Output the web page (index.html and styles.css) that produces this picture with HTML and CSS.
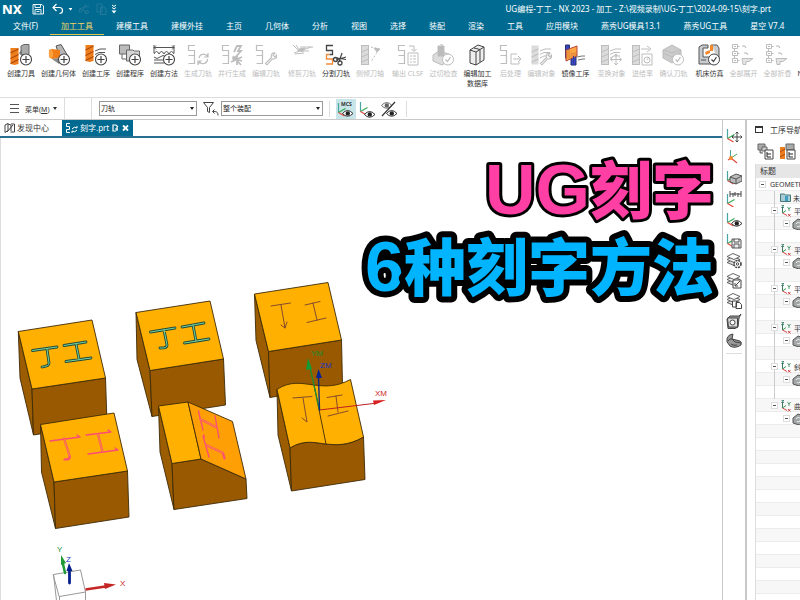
FILE: index.html
```html
<!DOCTYPE html>
<html lang="zh-CN">
<head>
<meta charset="utf-8">
<title>NX 2023 - 加工</title>
<link rel="stylesheet" href="styles.css">
</head>
<body>
<svg class="sprite" aria-hidden="true">
  <defs>
    <g id="plus"><circle cx="16" cy="15.500" r="5.500" fill="#fff" stroke="#444" stroke-width="1.100"/><path d="M12.500 15.500h7M16 12v7" stroke="#444" stroke-width="1.200"/></g>
    <g id="check"><circle cx="16" cy="15.500" r="5.500" fill="#fff" stroke="currentColor"/><path d="M13.500 15.500l2 2 3-4.500" fill="none" stroke="currentColor" stroke-width="1.200"/></g>
    <g id="path"><path d="M8 1.500h-6.500v5h6v5h-6M1.500 11.500h6v8h-6" fill="none" stroke="currentColor" stroke-width="1.200"/></g>
    <g id="endmill"><rect x="1.500" y="1.500" width="7" height="19" fill="currentColor" fill-opacity=".55"/><path d="M1.500 8l7-3M1.500 13l7-3M1.500 18l7-3" stroke="currentColor"/></g>
    <g id="drill"><path d="M.500 4h8v16l-4 1-4-1z" fill="#ef7d1c"/><path d="M.500 9l8-4M.500 14.500l8-4M.500 19.500l8-4" stroke="#a94c0c" stroke-width="1.100"/></g>
    <g id="wrench"><path d="M10.500 19.500l6-6c-1-3 1-5 3.500-4.500l-2 2.500 2 1.500 1.500-2c1 3-2 4.500-4 3.800l-5.500 6z" fill="#fff" stroke="currentColor" stroke-width="1.100"/></g>
    <g id="passes"><path d="M10 7l5-2h6M10 10.500l4-2h6M10 14l4-2h6" fill="none" stroke="currentColor"/></g>
    <g id="eye"><path d="M5.500 11.500q5-6 10.500 0-5.500 5.500-10.500 0z" fill="#fff" stroke="#333"/><circle cx="10.800" cy="11.400" r="2.200" fill="#222"/></g>
    <g id="axes" fill="none" stroke-width="1.200"><path d="M1.500 1v9.500" stroke="#49a5a0"/><path d="M1.500 10.500l7-4" stroke="#39ad56"/><path d="M1.500 10.500l6 3.500" stroke="#e34a3e"/></g>
    <g id="layers" stroke="#555" stroke-width=".900"><path d="M1 9.500l6-3 7 3-6 3z" fill="#ddd"/><path d="M1 6.500l6-3 7 3-6 3z" fill="#eee"/><path d="M1 3.500l6-3 7 3-6 3z" fill="#fff"/></g>
    <g id="csys" fill="none"><path d="M2.500 2v6" stroke="#3a7a62"/><path d="M2.500 8l3.500-2.500" stroke="#3aa05a"/><path d="M2.500 8l4.500 2.500" stroke="#d64545"/><path d="M1.500.500h2.500l-2.500 2h2.500" stroke="#376" stroke-width=".800"/><path d="M7.500 2l1.500 2 1.500-2M9 4v2" stroke="#3c8d5b" stroke-width=".900"/><path d="M8 9l2.500 2.500M10.500 9l-2.500 2.500" stroke="#c33" stroke-width=".900"/></g>
    <g id="cavity"><path d="M1 5l5-4 6 2v6l-5 3-6-2z" fill="#a3a6a6" stroke="#555"/><path d="M4 6c2-3 6-1 4 2-1 1-3 1-3 0" fill="none" stroke="#eee"/></g>
    <g id="tree"><path d="M2.500 1v17M2.500 2.500h5M2.500 9.500h5M2.500 16.500h5" stroke="currentColor" fill="none"/><path d="M.500.500h5v4h-5zM.500 7.500h5v4h-5zM.500 14.500h5v4h-5z" fill="#fff" stroke="currentColor"/><path d="M2 2.500h2M2 9.500h2M2 16.500h2M10 2h3l1 2M12 9h3l1 2M10 14.500h11l-4 3h-3v3h-3z" stroke="currentColor" fill="currentColor" fill-opacity=".4"/></g>
  </defs>
</svg>

<div class="app">
  <header class="head">
    <div class="titlebar">
      <strong class="brand">NX</strong>
      <div class="quick">
        <button aria-label="保存"><svg width="12" height="12" viewBox="0 0 12 12" fill="none" stroke="#e5f1f5"><path d="M1 1.500h9l1.500 1.500v8h-10.500zM3 1.500v3h5.500v-3M3 11v-4.500h6v4.500M4.500 8.500h3"/></svg></button>
        <button aria-label="撤消"><svg width="20" height="12" viewBox="0 0 20 12" fill="none" stroke="#fff"><path d="M4.500 1l-3.500 3.500 3.500 3.500M1 4.500h6.500c4 0 4 6 0 6" stroke-width="1.200"/><path d="M16.500 5h4l-2 2.500z" fill="#fff" stroke="none"/></svg></button>
        <button aria-label="剪切"><svg width="12" height="12" viewBox="0 0 12 12" fill="none" stroke="#24799c"><path d="M1 6l10-3M5 6l3 5M8 1l-3 5"/><circle cx="2.500" cy="8" r="1.500"/><circle cx="9" cy="9" r="1.500"/></svg></button>
        <button aria-label="复制"><svg width="11" height="12" viewBox="0 0 11 12" fill="none" stroke="#24799c"><path d="M1 1h5v8h-5zM4.500 4h3.500l2 2v5.500h-5.500z"/></svg></button>
        <button aria-label="更多"><svg width="6" height="12" viewBox="0 0 6 12" fill="none" stroke="#fff"><path d="M1 2l2 1.500 2-1.500M1 4.500l2 1.500 2-1.500"/><path d="M.500 7.500h5l-2.500 3z" fill="#fff" stroke="none"/></svg></button>
      </div>
      <h1 class="doc-title">UG编程-丁工 - NX 2023 - 加工 - Z:\视频录制\UG-丁工\2024-09-15\刻字.prt</h1>
    </div>
    <nav class="menu">
      <a href="#">文件(F)</a><a href="#" class="on">加工工具</a><a href="#">建模工具</a><a href="#">建模外挂</a><a href="#">主页</a><a href="#">几何体</a><a href="#">分析</a><a href="#">视图</a><a href="#">选择</a><a href="#">装配</a><a href="#">渲染</a><a href="#">工具</a><a href="#">应用模块</a><a href="#">燕秀UG模具13.1</a><a href="#">燕秀UG工具</a><a href="#">星空 V7.4</a>
    </nav>
  </header>

  <div class="ribbon">
    <button><svg viewBox="0 0 22 22"><path d="M11 2l3-1.500h5v10h-8z" fill="#aaa" stroke="#666"/><path d="M9 9l3-4v7z" fill="#777"/><use href="#drill"/><use href="#plus"/></svg><span>创建刀具</span></button>
    <button><svg viewBox="0 0 22 22"><path d="M8 2l5-1.500 6 10-6 6z" fill="#b5b5b5" stroke="#555"/><path d="M1 6l3-1 8 1v8l-8 1-3-2z" fill="#f07d16"/><ellipse cx="3" cy="10" rx="2.200" ry="4" fill="#ffa03f"/><path d="M4 15l7 5v-6z" fill="#888"/><use href="#plus"/></svg><span>创建几何体</span></button>
    <button><svg viewBox="0 0 22 22"><use href="#drill" y="-3"/><g color="#555"><use href="#passes"/></g><use href="#plus"/></svg><span>创建工序</span></button>
    <button><svg viewBox="0 0 22 22"><path d="M.500 1h10v9h-10z" fill="#bbb" stroke="#666"/><path d="M3 10v5h4" fill="none" stroke="#666"/><path d="M7.500 6h6l2 1h5v10h-13z" fill="#d5d5d5" stroke="#666"/><use href="#plus"/></svg><span>创建程序</span></button>
    <button><svg viewBox="0 0 22 22" fill="none" stroke="#555"><path d="M1 1v8M21 1v8M1 3.500h20M3 1.500l-2 2 2 2M19 1.500l2 2-2 2M1 10q2.500-5 5 0 2.500-5 5 0 2.500-5 5 0 2.500-5 5 0M1 13q3 3 6 0t6 0M1 16h9M1 19h10"/><use href="#plus"/></svg><span>创建方法</span></button>
    <button disabled><svg viewBox="0 0 22 22" fill="none" stroke="currentColor"><use href="#path"/><path d="M12 14a4.500 4.500 0 0 1 8-2l1-2M20.500 15a4.500 4.500 0 0 1-8 3l-1 2M21 9v4h-4M11 21v-4h4" stroke-width="1.200"/></svg><span>生成刀轨</span></button>
    <button disabled><svg viewBox="0 0 22 22" fill="none" stroke="currentColor"><use href="#path"/><path d="M13 8l3-6h4l-3 5h3l-8 9M10 18l11-5M12 12l8 9M16 11v10M11 14l10 3" stroke-width="1.800"/></svg><span>并行生成</span></button>
    <button disabled><svg viewBox="0 0 22 22"><use href="#path"/><use href="#wrench"/></svg><span>编辑刀轨</span></button>
    <button disabled class="far"><svg viewBox="0 0 22 22" fill="none" stroke="currentColor"><path d="M2 1l6 6M5 1l4 6M3 9l9-3 8-3M9 3h13M6 7h12M4 10l9-1"/><path d="M8 5l6-1-3 4z" fill="currentColor"/></svg><span>修剪刀轨</span></button>
    <button><svg viewBox="0 0 22 22" fill="none" stroke-width="1.300"><path d="M8 1.500h-6.500v5h6v4h-3" stroke="#444"/><path d="M4.500 10.500h-3v4.500h6v5h-6.500" stroke="#f28c38"/><g stroke="#444"><path d="M9 13.500l12 2M14 18l3-9M11 16l10-3" stroke-width="1.200"/><circle cx="10.500" cy="15.500" r="2"/><circle cx="15" cy="19" r="2"/></g></svg><span>分割刀轨</span></button>
    <button disabled><svg viewBox="0 0 22 22" fill="none" stroke="currentColor"><use href="#endmill" x="1"/><path d="M12 3l8 2-8 13" stroke-dasharray="2 2"/><path d="M15 4l6 1-3 3z" fill="currentColor"/></svg><span>侧倾刀轴</span></button>
    <button disabled class="far"><svg viewBox="0 0 22 22" fill="none" stroke="currentColor"><use href="#path"/><path d="M12 2h5v5M14.500 5l2.500 2.500 2.500-2.500M11 9h10v12h-10zM13 12h2M16 12h3M13 15h2M16 15h3M13 18h2M16 18h3"/></svg><span>输出 CLSF</span></button>
    <button disabled><svg viewBox="0 0 22 22" stroke="currentColor"><path d="M1 11l6-4 10 3v7l-7 4-9-4z" fill="#ddd"/><path d="M6 2h6v10h-6z" fill="#bbb"/><path d="M8 0h2v3" fill="none"/><use href="#check"/></svg><span>过切检查</span></button>
    <button><svg viewBox="0 0 22 22" fill="#eee" stroke="#444"><path d="M4 6l8-5 6 2v13l-8 5-6-2z"/><path d="M4 6l6 2 8-5M10 8v13M8 4l6 1.500M14 5.500v12.500" fill="none"/></svg><span>编辑加工<br>数据库</span></button>
    <button disabled class="far"><svg viewBox="0 0 22 22" fill="none" stroke="currentColor"><use href="#path"/><path d="M18 10h-6v10h8v-2M14 15h8M19 12l3 3-3 3"/></svg><span>后处理</span></button>
    <button disabled><svg viewBox="0 0 22 22"><use href="#endmill"/><use href="#passes"/><use href="#wrench"/></svg><span>编辑对象</span></button>
    <button><svg viewBox="0 0 22 22"><path d="M1.500 1h4v13h-4zM7 9h5v12h-5z" fill="#3949c8" stroke="#252d70"/><path d="M2 6l11-4v10l-11 5z" fill="#ff9c31" fill-opacity=".9" stroke="#b4473c"/><path d="M4 1v5M9.500 12v9" stroke="#2f3f9e"/><path d="M13 13l5-1h3M14 16l5-1h2" fill="none" stroke="#777"/></svg><span>镜像工序</span></button>
    <button disabled class="far"><svg viewBox="0 0 22 22" fill="none" stroke="currentColor"><use href="#endmill"/><use href="#passes"/><path d="M16 10v11M10.500 15.500h11M14 12l2-2 2 2M14 19l2 2 2-2M12.500 13.500l-2 2 2 2M19.500 13.500l2 2-2 2"/></svg><span>变换对象</span></button>
    <button disabled><svg viewBox="0 0 22 22" fill="none" stroke="currentColor"><use href="#endmill"/><path d="M10 5h8M16 2l4 3-4 3M11 10h10v11h-10z"/><circle cx="16" cy="16" r="3"/><path d="M16 16l2-3"/></svg><span>进给率</span></button>
    <button disabled><svg viewBox="0 0 22 22" stroke="currentColor"><path d="M1 6l9-5 9 5v8l-9 5-9-5z" fill="#ccc"/><path d="M1 9l9 4 9-5M1 6l9 3 9-3" fill="none"/><use href="#check"/></svg><span>确认刀轨</span></button>
    <button class="far"><svg viewBox="0 0 22 22" color="#444"><path d="M1 20v-17l3-2h6v3h-5v9h8v7zM13 1h6l2 3v12" fill="#c9cccf" stroke="#555"/><path d="M7 8l5-2v3l-4 2zM12 1h3v6h-3z" fill="#f28a2d"/><path d="M3 16h5" stroke="#555"/><use href="#check"/></svg><span>机床仿真</span></button>
    <button disabled><svg viewBox="0 0 22 22"><use href="#tree"/></svg><span>全部展开</span></button>
    <button disabled><svg viewBox="0 0 22 22"><use href="#tree"/></svg><span>全部折叠</span></button>
    <button><svg viewBox="0 0 22 22"><path d="M0 5h21v11h-21z" fill="#999" stroke="#555"/></svg><span>NX 后处理</span></button>
  </div>

  <div class="selbar">
    <button class="menu-btn"><svg width="9" height="9" viewBox="0 0 9 9"><path d="M0 .500h9M0 4.500h9M0 8.500h9" stroke="#555"/></svg><span>菜单(<u>M</u>)</span><i class="caret"></i></button>
    <span class="blank"></span>
    <label class="combo"><select aria-label="类型过滤器"><option>刀轨</option></select></label>
    <button class="tool" aria-label="过滤器"><svg width="16" height="16" viewBox="0 0 16 16" fill="#fff" stroke="#444"><path d="M.500 1.500h10l-4 5v5l-2-1v-4z"/><path d="M15 14.500c0-4-2-4-5-4M11.500 8.500l-2 2 2 2" fill="none"/></svg></button>
    <label class="combo"><select aria-label="选择范围"><option>整个装配</option></select></label>
    <span class="rule"></span>
    <div class="views">
      <button class="on" aria-label="显示 MCS"><svg width="18" height="18" viewBox="0 0 18 18"><use href="#axes" y="2"/><use href="#eye" y="2"/><text x="4" y="6" class="mcs">MCS</text></svg></button>
      <button aria-label="显示坐标系"><svg width="18" height="18" viewBox="0 0 18 18"><use href="#axes" y="1"/><use href="#eye" y="3"/></svg></button>
      <button aria-label="显示和隐藏"><svg width="18" height="18" viewBox="0 0 18 18"><g opacity=".7"><use href="#eye" x="-5" y="-6"/></g><use href="#eye" y="2"/><path d="M1 16l13-14" stroke="#333" stroke-width="1.200"/></svg></button>
    </div>
    <span class="rule"></span>
  </div>

  <main class="work">
    <section class="canvas">
      <div class="tabs">
        <a href="#"><svg width="11" height="10" viewBox="0 0 11 10" fill="none" stroke="#444"><path d="M1 2l3-1.500v7l-3 2zM4 1l3 1v6M7 1h3.500v8h-4M3 9l6-7"/></svg>发现中心</a>
        <a href="#" class="on"><svg width="12" height="10" viewBox="0 0 12 10" fill="none" stroke="#fff"><path d="M4 .500h-3.500v3h3v3h-3v3h3.500M6 6q2-3 5-1v-2M11 7q-2 3-5 1v2"/></svg>刻字.prt<svg class="end" width="17" height="8" viewBox="0 0 17 8" fill="none" stroke="#fff"><path d="M4 7h-3v-6h3l2 2M3 5h3M5 3v4" stroke-width="1.200"/><path d="M11 1.500l5 5M16 1.500l-5 5" stroke-width="1.800"/></svg></a>
      </div>
      <div class="scene">
        <svg class="model" role="img" aria-label="六个刻字方块">
          <g transform="translate(-1 -138)" stroke="#3d2a08" stroke-width=".900" stroke-linejoin="round">
            <g><path fill="#9c5d00" d="M18.300 331.500L32 389l1.500 46L20 378z"/><path fill="#995900" d="M32 389l73.500-11 1.500 45-73.500 12z"/><path fill="#ffb000" d="M18.300 331.500L92 320l13.500 58L32 389z"/></g>
            <g><path fill="#9c5d00" d="M136 312.500l14 58 2 46-15-57z"/><path fill="#995900" d="M150 370.500l73.500-11.500 2 46-73.500 11.500z"/><path fill="#ffb000" d="M136 312.500L210 301l13.500 58-73.500 11.500z"/></g>
            <g><path fill="#9c5d00" d="M254.500 294l14 57.500 1.500 46-14-57z"/><path fill="#995900" d="M268.500 351.500l73-11.500 1 45-72.500 12.500z"/><path fill="#ffb000" d="M254.500 294l73.500-11.500 13.500 57.500-73 11.500z"/></g>
            <g><path fill="#9c5d00" d="M40.500 424.500L54 482l1.500 46.500L41.500 472z"/><path fill="#995900" d="M54 482l73.500-11 1.500 46-73.500 11.500z"/><path fill="#ffb000" d="M40.500 424.500L114 413l13.500 58L54 482z"/></g>
            <g><path fill="#9c5d00" d="M158.500 406l13.500 57.500 2 46L160 452z"/><path fill="#995900" d="M172 463.500l29-4.500 45 20 1 19.500-73 11z"/><path fill="#ffb000" d="M158.500 406l29.500-4 13 57-29 4.500z"/><path fill="#ff9f06" d="M188 402l44.500 19.500L246 479l-45-20z"/></g>
            <g><path fill="#9c5d00" d="M277 389.500L290 448l1.500 43L278 435z"/><path fill="#995900" d="M290 448c14-9 26-5 36-4s22 2 37.500-7l1.500 42.500-73.500 11.500z"/><path fill="#ffb000" d="M277 389.500c13-9 25-6 37-4.500 12 1.500 22 2 36.500-5.500L363.500 437c-15.500 9-27.500 8-37.500 7s-22-5-36 4z"/><path d="M314 385l12 59" fill="none"/></g>
          </g>
          <g transform="translate(-1 -138)" fill="none" stroke-linecap="round" stroke-linejoin="round">
            <g stroke="#234b3a" stroke-width="2.800"><path id="e1" d="M32.500 350.500L57 347M47 349l2 14c0 3-3 3-7 4M64 345.500l22-3.500M76 344l3 15M66 361.500l25-3.500"/><path id="e2" d="M150.500 332l24.500-4M164 330l3 15c0 3-3 3-7 3M182 327l22-4M193 325l3 16M184.500 343l24.500-4"/></g>
            <g stroke="#74d3a0" stroke-width="1"><path d="M32.500 350.500L57 347M47 349l2 14c0 3-3 3-7 4M64 345.500l22-3.500M76 344l3 15M66 361.500l25-3.500"/><path d="M150.500 332l24.500-4M164 330l3 15c0 3-3 3-7 3M182 327l22-4M193 325l3 16M184.500 343l24.500-4"/></g>
            <g stroke="#763f32" stroke-width=".900"><path d="M271 306l19.500-3M281 305l4 23M281 325l4 3 2-6M305 305l15-3.500M313 303l4 17M307 322.500l19-4.500"/><path d="M293 398l19-1.500M303 398l4 24-5-4M327 397.500l15-2.500M336 396l2 16M328 416l20-5"/></g>
            <g stroke="#fb4b77"><path stroke-width="2.200" d="M64 438.500l5.500 17c1 4-2 4-5 4M98 434l4.500 18M200 419l16 8M206 445l17 8 1.500 5.500"/><path stroke-width="1.300" d="M50 441l30-4-3-2M86 435l25-3-3-2M88 454l30-4-3-2M198.500 411l4.500 19M215 416l4 22M203 436l6 21M204 435v5"/></g>
            <path stroke="#ff9e1f" stroke-width=".800" d="M64 438.500l5.500 17M98 434l4.500 18M200 419l16 8M206 445l17 8"/>
            <path stroke="#bd2020" d="M319.500 410l54-6.500"/><path fill="#d92020" d="M373 400.500l13-.500-12 5z"/>
            <path stroke="#169033" stroke-width="1.200" d="M319.500 410l-10-45"/><path fill="#159a35" d="M308 358l4 11-6 1z"/>
            <path stroke="#0b2b82" stroke-width="1.400" d="M319.500 410l-1-34"/><path fill="#08268f" d="M318.500 369l3.500 9h-6z"/>
            <g stroke="#999"><path fill="#fff" d="M53.500 574.500l27-4.500 5 22-26 4.500z"/><path d="M53.500 574.500l3 26M59.500 596.500v6M85.500 592v10"/></g>
            <path stroke="#1f9a36" stroke-width="2.500" d="M65 573l-2-9"/><path fill="#1f9a36" d="M61 555l5 8-5 2z"/>
            <path stroke="#05208c" stroke-width="2.800" d="M69.500 583v-12"/><path fill="#05208c" d="M69 563l3.500 8h-6z"/>
            <path stroke="#c42525" stroke-width="2.600" stroke-linecap="butt" d="M85.500 589.500l20-3"/><path fill="#c42525" d="M104 583l12 1.500-11 4.500z"/>
          </g>
          <g transform="translate(-1 -138)" class="axis">
            <text x="375" y="396" fill="#d02626">XM</text><text x="320" y="368" fill="#2036c4">ZM</text><text x="311" y="356" fill="#178f35">YM</text>
            <text x="57" y="552" fill="#178f35">Y</text><text x="66" y="562" fill="#2036c4">Z</text><text x="120" y="586" fill="#d02626">X</text>
          </g>
        </svg>
        <svg class="caption" width="380" height="170">
          <text x="372" y="76" text-anchor="end" class="pink"><tspan class="latin">UG</tspan>刻字</text>
          <text x="372" y="153" text-anchor="end" class="blue"><tspan class="latin">6</tspan>种刻字方法</text>
        </svg>
      </div>
    </section>

    <aside class="side">
      <div>
        <button aria-label="移动"><svg viewBox="0 0 16 16"><use href="#axes"/><path d="M11 4v10M6 9h10M9.500 5.500l1.500-1.500 1.500 1.500M9.500 12.500l1.500 1.500 1.500-1.500M7.500 7.500l-1.500 1.500 1.500 1.500M14.500 7.500l1.500 1.500-1.500 1.500" fill="none" stroke="#444"/></svg></button>
        <button aria-label="坐标系"><svg viewBox="0 0 16 16" fill="none"><path d="M4.500 1v8" stroke="#49a5a0"/><path d="M5 9l6-4" stroke="#39ad56"/><path d="M5 9l6 5M2 11l3-2" stroke="#e34a3e" stroke-width="1.200"/><circle cx="5" cy="9" r="2" fill="#f38b31"/></svg></button>
        <button aria-label="工件"><svg viewBox="0 0 16 16"><use href="#axes"/><path d="M4 7l6-3 6 2v5l-6 3-6-2z" fill="#bbb" stroke="#555"/><path d="M4 7l6 2 6-3M10 9v5" fill="none" stroke="#555"/></svg></button>
        <button aria-label="测量"><svg viewBox="0 0 16 16" fill="none"><use href="#axes" y="2"/><path d="M4 0v6M15 0v6M4 3h11M7 2v4M9 1v4M12 2v4" stroke="#444"/></svg></button>
        <button aria-label="显示"><svg viewBox="0 0 16 16"><use href="#axes"/><use href="#eye"/></svg></button>
        <button aria-label="保存坐标系"><svg viewBox="0 0 16 16"><use href="#axes"/><path d="M6 6h8l1 1v8h-9zM8 6v3h5v-3M8 15v-4h5v4" fill="#eee" stroke="#555"/></svg></button>
      </div>
      <div class="tight">
        <button aria-label="图层设置"><svg viewBox="0 0 16 16"><use href="#layers"/><circle cx="11.500" cy="11" r="3.500" fill="#fff" stroke="#444" stroke-width="1.600" stroke-dasharray="2 .8"/><circle cx="11.500" cy="11" r="1.200" fill="none" stroke="#444"/></svg></button>
        <button aria-label="移至图层"><svg viewBox="0 0 16 16"><use href="#layers"/><path d="M7 7h8v8h-8z" fill="#fff" stroke="#444"/><path d="M14 8l-5 5M9 10v3h3" fill="none" stroke="#444"/></svg></button>
        <button aria-label="复制至图层"><svg viewBox="0 0 16 16"><use href="#layers"/><path d="M6.500 8h4v6h-4zM10 9.500h3.500l2 2v4h-5.500z" fill="#fff" stroke="#444"/></svg></button>
        <button aria-label="截面"><svg viewBox="0 0 16 16"><path d="M1 6l3-3h9l2-2-2 4-1 9-3 1.500h-7z" fill="#999" stroke="#444"/><path d="M1.500 5h10v9h-9z" fill="#ddd" stroke="#444"/><circle cx="6.500" cy="9.500" r="2.500" fill="#fff" stroke="#444"/></svg></button>
        <button aria-label="轮廓"><svg viewBox="0 0 16 16"><path d="M1 9q-1-7 6-8l-1 5 8 2q2 1 1 4-6 4-11 1z" fill="#999" stroke="#444"/><path d="M2 8q2-3 4-2l3 3 6 1M5 11q3 2 6 1" fill="none" stroke="#444"/></svg></button>
      </div>
    </aside>

    <section class="nav">
      <h2><i class="box"></i>工序导航器</h2>
      <div class="nav-tools">
        <button aria-label="程序顺序视图"><svg viewBox="0 0 17 17"><path d="M1 1h7v6h-7zM3 7v3h3" fill="#aaa" stroke="#666"/><path d="M5 4h5v4h-5z" fill="#ccc" stroke="#666"/><path d="M8 7h8v9h-8z" fill="#fff" stroke="#444"/><path d="M10 9v5h4M10 11h4" fill="none" stroke="#222"/></svg></button>
        <button aria-label="机床视图"><svg viewBox="0 0 17 17"><path d="M1 4h5v12h-5z" fill="#ee7e1d"/><path d="M1 9l5-3M1 14l5-3" stroke="#a64b0c"/><path d="M7 1h8v6h-8z" fill="#aaa" stroke="#666"/><path d="M8 7h8v9h-8z" fill="#fff" stroke="#444"/><path d="M10 9v5h4M10 11h4" fill="none" stroke="#222"/></svg></button>
        <button class="on" aria-label="几何视图"></button>
      </div>
      <div class="tree">
        <div class="th">标题</div>
        <ul>
          <li><i class="tg"></i>GEOMETRY</li>
          <li class="l1"><i class="none"></i><svg width="11" height="9" viewBox="0 0 11 9"><path d="M.500 1h4l1 1h5v6.500h-10z" fill="#a9cbd6" stroke="#477"/><path d="M5 3h3v5h-3z" fill="#3d9fc4"/></svg>未用项</li>
          <li class="l1"><i class="tg"></i><svg width="12" height="12"><use href="#csys"/></svg>平面</li>
          <li class="l2"><i class="tg"></i><svg width="13" height="12"><use href="#cavity"/></svg></li>
          <li class="l3"></li>
          <li class="l1"><i class="tg"></i><svg width="12" height="12"><use href="#csys"/></svg>平面</li>
          <li class="l2"><i class="tg"></i><svg width="13" height="12"><use href="#cavity"/></svg></li>
          <li class="l3"></li>
          <li class="l1"><i class="tg"></i><svg width="12" height="12"><use href="#csys"/></svg>平面</li>
          <li class="l2"><i class="tg"></i><svg width="13" height="12"><use href="#cavity"/></svg></li>
          <li class="l3"></li>
          <li class="l1"><i class="tg"></i><svg width="12" height="12"><use href="#csys"/></svg>平面</li>
          <li class="l2"><i class="tg"></i><svg width="13" height="12"><use href="#cavity"/></svg></li>
          <li class="l3"></li>
          <li class="l1"><i class="tg"></i><svg width="12" height="12"><use href="#csys"/></svg>斜面</li>
          <li class="l2"><i class="tg"></i><svg width="13" height="12"><use href="#cavity"/></svg></li>
          <li class="l3"></li>
          <li class="l1 last"><i class="tg"></i><svg width="12" height="12"><use href="#csys"/></svg>曲面</li>
          <li class="l2 last"><i class="tg"></i><svg width="13" height="12"><use href="#cavity"/></svg></li>
        </ul>
      </div>
    </section>
  </main>
</div>
</body>
</html>
```
FILE: styles.css
```css
* { box-sizing: border-box; }
body {
  margin: 0;
  font-family: "Noto Sans", "Noto Sans CJK SC", sans-serif;
  font-size: 7px;
  color: #333;
  background: #fff;
  overflow: hidden;
}
button {
  border: 0;
  padding: 0;
  background: none;
  font: inherit;
  color: inherit;
}
a { color: inherit; text-decoration: none; }
svg { display: block; flex: none; }
.sprite { position: absolute; width: 0; height: 0; }
.app { display: flex; flex-direction: column; height: 100vh; }

.head { background: #006a90; color: #fff; font-size: 8px; }
.titlebar { display: flex; align-items: center; height: 17px; padding-left: 2px; }
.brand { width: 30px; font-family: "Noto Sans", sans-serif; font-size: 13px; font-weight: 800; line-height: 16px; }
.quick { display: flex; gap: 6px; flex: 1; }
.quick button:nth-child(2) { margin-left: 2px; }
.quick button:nth-child(5) { margin-left: -2px; }
.doc-title { margin: 0 29px 0 0; font-size: 8px; font-weight: 400; line-height: 16px; white-space: nowrap; }
.menu { display: flex; gap: 1px; height: 19px; padding-left: 2px; white-space: nowrap; overflow: hidden; }
.menu a { padding: 0 11px; line-height: 18px; height: 18px; }
.menu .on { color: #f2d568; border-bottom: 1px solid #e6c84f; }

.ribbon {
  display: flex;
  gap: 6px;
  height: 62px;
  padding: 8px 0 0 7px;
  overflow: hidden;
  border-bottom: 1px solid #ddd;
}
.ribbon button {
  display: flex;
  flex: none;
  flex-direction: column;
  align-items: center;
  justify-content: flex-start;
  gap: 3px;
  line-height: 10px;
  white-space: nowrap;
}
.ribbon svg { width: 22px; height: 22px; }
.ribbon button:disabled { color: #bdbdbd; }
.ribbon .far { margin-left: 2px; }

.selbar { display: flex; align-items: center; height: 22px; border-bottom: 1px solid #c9c9c9; }
.menu-btn { display: flex; align-items: center; gap: 6px; padding-left: 10px; width: 64px; }
.caret { border: 2px solid transparent; border-top: 3px solid #333; border-bottom: 0; }
.menu-btn .caret { margin-left: -3px; }
.blank { width: 28px; height: 21px; margin-right: 7px; border: solid #ddd; border-width: 0 1px; }
.combo { position: relative; width: 98px; }
.combo:nth-of-type(2) { width: 102px; }
.combo + .rule, .tool { margin-left: 6px; }
.tool { margin-right: 2px; }
.combo::after {
  content: "";
  position: absolute;
  right: 3px;
  top: 6px;
  border: 2px solid transparent;
  border-top: 3px solid #222;
  border-bottom: 0;
}
.combo select {
  display: block;
  width: 100%;
  height: 15px;
  padding: 0 1px;
  border: 1px solid #9a9a9a;
  border-radius: 0;
  appearance: none;
  background: #fff;
  color: #222;
  font: inherit;
}
.rule { width: 1px; height: 16px; background: #ddd; }
.views { display: flex; gap: 2px; padding: 0 6px; }
.views button { padding: 1px; border-radius: 0; }
.views .on { background: #c8e6ea; }
.mcs { font: 700 5px "Noto Sans", sans-serif; fill: #333; }

.work { display: flex; flex: 1; min-height: 0; }
.canvas { display: flex; flex-direction: column; flex: 1; min-width: 0; }
.tabs { display: flex; height: 18px; border-bottom: 2px solid #2a6f92; font-size: 8px; line-height: 16px; }
.tabs a { display: flex; align-items: center; gap: 2px; padding: 0 13px 0 4px; }
.tabs .on { padding: 0 4px; background: #006a90; color: #fff; }
.tabs .end { margin-left: 1px; }
.scene { position: relative; flex: 1; overflow: hidden; border-left: 1px solid #ddd; }
.model { width: 100%; height: 100%; }
.axis { font-family: "Liberation Sans", sans-serif; font-size: 8px; }
.caption { position: absolute; right: 0; top: 0; overflow: visible; }
.caption text {
  font-family: "Liberation Sans", "Noto Sans CJK SC", sans-serif;
  font-size: 62px;
  font-weight: 900;
  paint-order: stroke;
  stroke: #000;
  stroke-linejoin: round;
}
.caption .latin { font-size: 70px; }
.pink { fill: #ff3fa4; stroke-width: 6px; }
.blue { fill: #00b4ff; stroke-width: 12px; }

.side {
  flex: none;
  width: 25px;
  padding: 8px 3px 0;
  border: solid #c9c9c9;
  border-width: 0 2px 0 1px;
}
.side div { display: flex; flex-direction: column; gap: 5px; }
.side .tight { gap: 4px; margin-top: 4px; padding-bottom: 4px; border-bottom: 1px solid #ddd; }
.side svg { width: 16px; height: 16px; }

.nav { flex: none; width: 7%; padding-left: 8px; margin-right: -3px; overflow: hidden; white-space: nowrap; }
.nav h2 { display: flex; align-items: center; gap: 7px; margin: 0; height: 19px; font-size: 8px; font-weight: 400; }
.box { flex: none; width: 8px; height: 7px; border: 1px solid #333; border-top-width: 2px; }
.nav-tools { display: flex; align-items: center; gap: 5px; height: 25px; padding-left: 2px; }
.nav-tools svg { width: 17px; height: 17px; }
.nav-tools .on { flex: none; width: 22px; height: 20px; background: #c8e6ea; border: 1px solid #6bb2c0; }
.tree {
  height: 100%;
  border-left: 1px solid #ddd;
  background: repeating-linear-gradient(#fff 0 12px, #ececec 12px 13px, #f7f7f7 13px 25px, #ececec 25px 26px) 0 14px;
}
.th { height: 14px; padding-left: 4px; background: #e6e6e6; font-size: 8px; line-height: 14px; }
.tree ul { margin: 0; padding: 0; list-style: none; }
.tree li { display: flex; align-items: center; gap: 2px; height: 13px; padding-left: 3px; }
.tree li.l1 { padding-left: 15px; }
.tree li.l2 { padding-left: 27px; }
.tree li:not(:first-child):not(.last) { background: linear-gradient(#ccc, #ccc) 18px 0 / 1px 100% no-repeat; }
.tg, .none { flex: none; width: 7px; height: 7px; }
.tg { border: 1px solid #ddd; background: linear-gradient(#555, #555) center / 3px 1px no-repeat #fff; }
.tree li:first-child { gap: 4px; }
```
